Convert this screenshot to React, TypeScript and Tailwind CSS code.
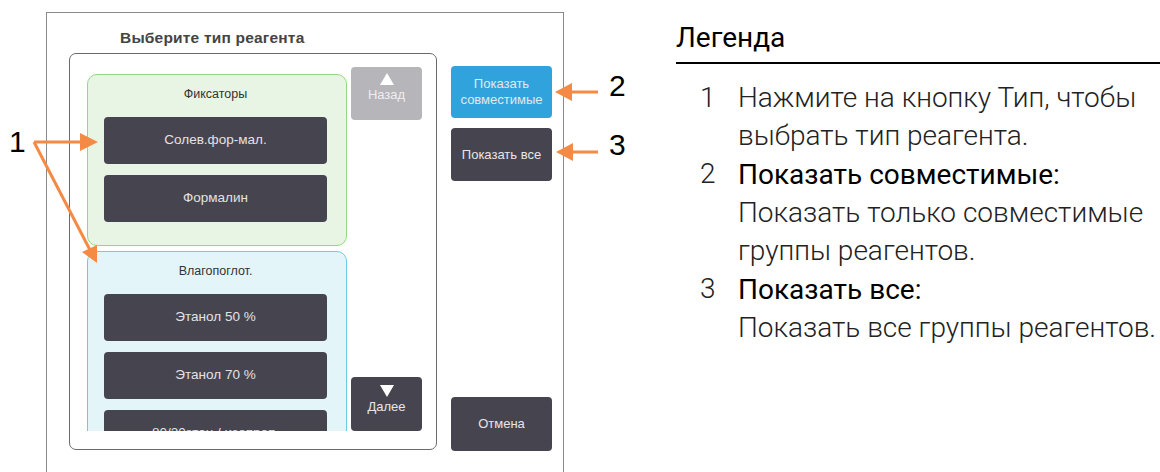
import React from 'react';

// --- Dark reagent button ---
const ReagentButton = ({ label }: { label: string }) => (
  <div className="w-[223px] h-[47px] shrink-0 rounded-[4px] bg-[#46454f] flex items-center justify-center text-[13.5px] text-[#e2e2e4]">
    {label}
  </div>
);

// --- Reagent group (green / blue) ---
const Group = ({ title, items, className = "" }: any) => (
  <div className={`w-[260px] rounded-[10px] border pl-[16px] pt-[11px] ${className}`}>
    <div className="w-[223px] text-center text-[12.5px] text-[#333] h-[16px] leading-[16px]">{title}</div>
    <div className="mt-[15px] flex flex-col gap-[11px]">
      {items.map((i: string) => (
        <ReagentButton key={i} label={i} />
      ))}
    </div>
  </div>
);

const SideButton = ({ children, className = "" }: any) => (
  <div className={`w-[101px] rounded-[4px] flex items-center justify-center text-center text-[13px] leading-[16px] text-[#e6e6ea] ${className}`}>
    {children}
  </div>
);

const Triangle = ({ up }: { up: boolean }) => (
  <svg width="14" height="12" viewBox="0 0 14 12">
    <polygon points={up ? "7,0 14,12 0,12" : "0,0 14,0 7,12"} fill="#ffffff" />
  </svg>
);

const LegendItem = ({ n, children }: any) => (
  <div className="flex">
    <div className="w-[62px] pl-[24px] font-light text-[#222]">{n}</div>
    <div className="flex-1">{children}</div>
  </div>
);

export default function App() {
  return (
    <div className="relative w-[1160px] h-[472px] bg-white overflow-hidden flex font-['Liberation_Sans',Arial,sans-serif]">
      {/* Screen frame */}
      <div className="pl-[46px] pt-[12px]">
        <div className="w-[518px] h-[480px] border-[1.5px] border-[#8a8a8a]">
          <div className="pl-[73px] pt-[15px] h-[40px] text-[15.5px] leading-[20px] tracking-[0.2px] font-bold text-[#444]">Выберите тип реагента</div>
          <div className="flex pl-[22px]">
            {/* Inner scroll panel */}
            <div className="w-[368px] h-[397px] rounded-[7px] border-[1.5px] border-[#6b6b6b] flex">
              <div className="ml-[17px] mt-[20px] w-[260px] h-[357px] overflow-hidden flex flex-col gap-[5px]">
                <Group
                  title="Фиксаторы"
                  items={["Солев.фор-мал.", "Формалин"]}
                  className="bg-[#e9f5e4] border-[#93d97d] h-[172px] shrink-0"
                />
                <Group
                  title="Влагопоглот."
                  items={["Этанол 50 %", "Этанол 70 %", "80/20этан / изопроп."]}
                  className="bg-[#e4f5fa] border-[#66cfe6] h-[240px] shrink-0"
                />
              </div>
              <div className="ml-[4px] mt-[13px] h-[364px] flex flex-col justify-between">
                <div className="w-[71px] h-[53px] rounded-[4px] bg-[#b6b5ba] flex flex-col items-center pt-[6px] text-[13px] text-[#eeeef0] leading-[16px]">
                  <Triangle up />
                  <span className="mt-[2px]">Назад</span>
                </div>
                <div className="w-[71px] h-[54px] rounded-[4px] bg-[#46454f] flex flex-col items-center pt-[8px] text-[13px] text-[#e6e6ea] leading-[16px]">
                  <Triangle up={false} />
                  <span className="mt-[2px]">Далее</span>
                </div>
              </div>
            </div>
            {/* Right-hand buttons */}
            <div className="ml-[14px] pt-[13px] h-[397px] flex flex-col">
              <SideButton className="h-[52px] bg-[#30a3dc]">Показать<br />совместимые</SideButton>
              <SideButton className="h-[53px] mt-[10px] bg-[#46454f]">Показать все</SideButton>
              <SideButton className="h-[54px] mt-auto mb-[-1px] bg-[#46454f]">Отмена</SideButton>
            </div>
          </div>
        </div>
      </div>

      {/* Legend */}
      <div className="ml-[112px] flex-1 font-['Roboto',sans-serif]">
        <div className="pt-[18px] h-[62px] text-[28px] leading-[40px] text-black">Легенда</div>
        <div className="h-[2px] bg-black" />
        <div className="pt-[15px] text-[28px] leading-[38px] text-[#222]">
          <LegendItem n="1">
            <div className="font-light">Нажмите на кнопку Тип, чтобы<br />выбрать тип реагента.</div>
          </LegendItem>
          <LegendItem n="2">
            <div className="text-black mt-[1px]">Показать совместимые:</div>
            <div className="font-light">Показать только совместимые<br />группы реагентов.</div>
          </LegendItem>
          <LegendItem n="3">
            <div className="text-black mt-[1px]">Показать все:</div>
            <div className="font-light">Показать все группы реагентов.</div>
          </LegendItem>
        </div>
      </div>

      {/* Callout arrows */}
      <svg className="absolute left-0 top-0 pointer-events-none" width="1160" height="472">
        <g stroke="#f58a45" strokeWidth="3" fill="none">
          <line x1="34" y1="142" x2="84" y2="142" />
          <line x1="34" y1="142" x2="90" y2="250" />
          <line x1="568" y1="92" x2="598" y2="92" />
          <line x1="568" y1="152" x2="598" y2="152" />
        </g>
        <g fill="#f58a45">
          <polygon points="98,142 80,133 80,151" />
          <polygon points="97,263 82,252 97,245" />
          <polygon points="555,92 572,83 572,101" />
          <polygon points="556,152 573,143 573,161" />
        </g>
        <g fontFamily="Liberation Sans, Arial, sans-serif" fontSize="30" fill="#000">
          <text x="9" y="152">1</text>
          <text x="609" y="96">2</text>
          <text x="609" y="155">3</text>
        </g>
      </svg>
    </div>
  );
}
